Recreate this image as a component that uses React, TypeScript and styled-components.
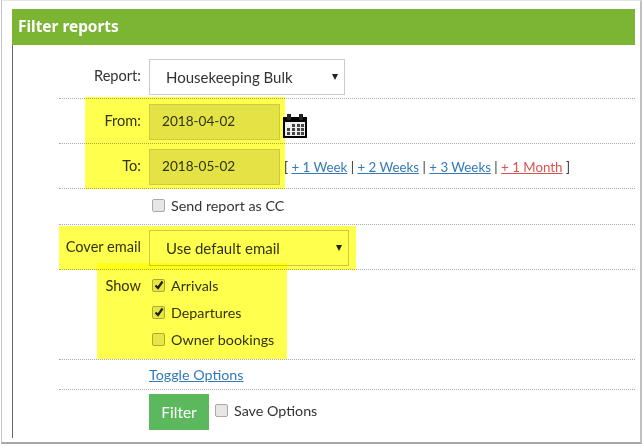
import styled, { createGlobalStyle } from 'styled-components';

const GlobalStyle = createGlobalStyle`
  html, body {
    margin: 0;
    padding: 0;
    background: #fff;
  }
  body {
    font-family: Lato, "Noto Sans", "Liberation Sans", sans-serif;
    font-size: 14.3px;
    color: #333;
  }
`;

function CalendarIcon() {
  return (
    <svg width="25" height="25" viewBox="0 0 25 25" shapeRendering="crispEdges">
      <rect x="0" y="3" width="24" height="21" fill="#000" />
      <rect x="4" y="0" width="4" height="6" fill="#222" />
      <rect x="16" y="0" width="4" height="6" fill="#222" />
      <rect x="2" y="8" width="20" height="14" fill="#eee" />
      {[10, 14, 18].map((y) =>
        [4, 9, 14, 18].map((x) =>
          x === 4 && y === 10 ? null : <rect key={`${x}-${y}`} x={x} y={y} width="3" height="3" fill="#444" />
        )
      )}
    </svg>
  );
}

function Check() {
  return (
    <svg width="10" height="10" viewBox="0 0 10 10">
      <path d="M1.5 5.5 L4 8 L8.5 1.5" fill="none" stroke="#222" strokeWidth="2.2" />
    </svg>
  );
}

function App() {
  return (
    <>
      <GlobalStyle />
      <Frame>
        <Header>Filter reports</Header>
        <Body>
          <Row $height={54}>
            <Label $top={14}>Report:</Label>
            <SelectBox $width={196} $top={14}>
              Housekeeping Bulk
              <Caret />
            </SelectBox>
          </Row>
          <Row $height={45}>
            <Label $top={5}>From:</Label>
            <DateInput>2018-04-02</DateInput>
            <IconSlot>
              <CalendarIcon />
            </IconSlot>
          </Row>
          <Row $height={45}>
            <Label $top={5}>To:</Label>
            <DateInput>2018-05-02</DateInput>
            <QuickLinks>
              [ <QuickLink>+ 1 Week</QuickLink> | <QuickLink>+ 2 Weeks</QuickLink> | <QuickLink>+ 3 Weeks</QuickLink> |{' '}
              <QuickLink $danger>+ 1 Month</QuickLink> ]
            </QuickLinks>
          </Row>
          <Row $height={36}>
            <Label />
            <CheckLine>
              <CheckBox />
              Send report as CC
            </CheckLine>
          </Row>
          <Row $height={45}>
            <Label $top={5}>Cover email</Label>
            <SelectBox $width={200} $top={5}>
              Use default email
              <Caret />
            </SelectBox>
          </Row>
          <Row $height={90}>
            <Label $top={-1}>Show</Label>
            <CheckStack>
              <CheckLine>
                <CheckBox>
                  <Check />
                </CheckBox>
                Arrivals
              </CheckLine>
              <CheckLine>
                <CheckBox>
                  <Check />
                </CheckBox>
                Departures
              </CheckLine>
              <CheckLine>
                <CheckBox />
                Owner bookings
              </CheckLine>
            </CheckStack>
          </Row>
          <Row $height={30}>
            <Label />
            <ToggleLink>Toggle Options</ToggleLink>
          </Row>
          <LastRow>
            <Label />
            <FilterButton>Filter</FilterButton>
            <CheckLine>
              <CheckBox />
              Save Options
            </CheckLine>
          </LastRow>
        </Body>
        <Highlight $left={83} $top={96} $width={200} $height={92} />
        <Highlight $left={57} $top={225} $width={297} $height={44} />
        <Highlight $left={95} $top={262} $width={190} $height={96} />
      </Frame>
    </>
  );
}

const Frame = styled.div`
  position: relative;
  box-sizing: border-box;
  width: 641px;
  height: 444px;
  margin-left: 1px;
  padding: 8px 5px 5px 10px;
  background: #fff;
  border-top: 1px solid #e4e4e4;
  border-left: 1px solid #c4c4c4;
  border-right: 2px solid #c0c0c0;
  border-bottom: 2px solid #a8a8a8;
`;

const Header = styled.div`
  box-sizing: border-box;
  height: 36px;
  padding-left: 6px;
  background: #7cb434;
  color: #fff;
  font-family: "Noto Sans", Lato, sans-serif;
  font-size: 15.4px;
  font-weight: 700;
  line-height: 36px;
`;

const Body = styled.div`
  height: 393px;
  padding-left: 46px;
  border-left: 1px solid #666;
`;

const Row = styled.div<{ $height: number }>`
  box-sizing: border-box;
  display: flex;
  height: ${(p) => p.$height}px;
  border-bottom: 1px dotted #aaa;
`;

const LastRow = styled.div`
  display: flex;
  align-items: flex-start;
  padding-top: 4px;
`;

const Label = styled.div<{ $top?: number }>`
  flex: none;
  box-sizing: border-box;
  width: 90px;
  height: 34px;
  margin-top: ${(p) => p.$top ?? 0}px;
  padding-right: 8px;
  font-size: 14.6px;
  text-align: right;
  line-height: 34px;
`;

const SelectBox = styled.div<{ $width: number; $top: number }>`
  box-sizing: border-box;
  display: flex;
  align-items: center;
  justify-content: space-between;
  width: ${(p) => p.$width}px;
  height: 36px;
  margin-top: ${(p) => p.$top}px;
  padding-left: 16px;
  padding-right: 6px;
  background: #fff;
  border: 1px solid #ccc;
  font-size: 15px;
`;

const Caret = styled.span`
  width: 0;
  height: 0;
  margin-top: -1px;
  border-left: 3px solid transparent;
  border-right: 3px solid transparent;
  border-top: 6px solid #222;
`;

const DateInput = styled.div`
  box-sizing: border-box;
  width: 131px;
  height: 36px;
  margin-top: 5px;
  padding-left: 12px;
  background: #e3e3e3;
  border: 1px solid #ccc;
  font-size: 13.6px;
  line-height: 33px;
`;

const IconSlot = styled.div`
  margin: 15px 0 0 3px;
`;

const QuickLinks = styled.div`
  margin-left: 4px;
  font-size: 13.3px;
  line-height: 46px;
  white-space: nowrap;
`;

const QuickLink = styled.span<{ $danger?: boolean }>`
  color: ${(p) => (p.$danger ? '#d9534f' : '#337ab7')};
  text-decoration: underline;
`;

const CheckStack = styled.div`
  display: flex;
  flex-direction: column;
  gap: 7px;
  padding-top: 5px;
`;

const CheckLine = styled.div`
  display: flex;
  align-items: center;
  gap: 6px;
  height: 20px;
  margin-top: 6px;
  margin-left: 3px;
  white-space: nowrap;

  ${CheckStack} & {
    margin-top: 0;
  }
`;

const CheckBox = styled.span`
  flex: none;
  box-sizing: border-box;
  display: flex;
  align-items: center;
  justify-content: center;
  width: 13px;
  height: 13px;
  background: #e6e6e6;
  border: 1px solid #aaa;
  border-radius: 2px;
`;

const ToggleLink = styled.span`
  color: #337ab7;
  text-decoration: underline;
  line-height: 30px;
`;

const FilterButton = styled.div`
  flex: none;
  width: 60px;
  height: 36px;
  margin-right: 3px;
  background: #5cb85c;
  color: #fff;
  font-size: 15.5px;
  line-height: 36px;
  text-align: center;
`;

const Highlight = styled.div<{ $left: number; $top: number; $width: number; $height: number }>`
  position: absolute;
  left: ${(p) => p.$left}px;
  top: ${(p) => p.$top}px;
  width: ${(p) => p.$width}px;
  height: ${(p) => p.$height}px;
  background: #ffff4d;
  mix-blend-mode: multiply;
`;

export default App;
